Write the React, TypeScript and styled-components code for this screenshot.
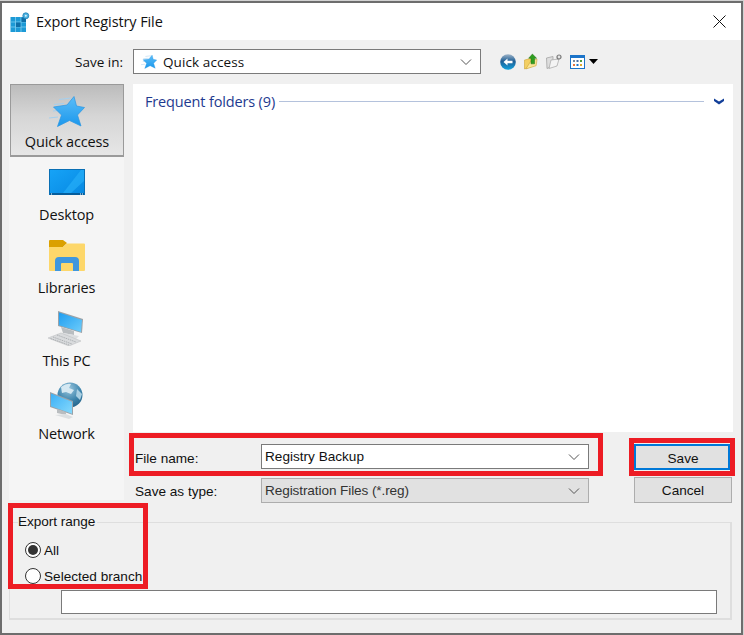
import React from 'react';
import styled, { createGlobalStyle } from 'styled-components';

const UI_FONT = '"Open Sans", "Noto Sans", "Liberation Sans", sans-serif';
const FORM_FONT = '"Liberation Sans", Arial, sans-serif';

const Global = createGlobalStyle`
  html, body { margin: 0; padding: 0; background: #d2d2d2; }
  body { width: 744px; height: 635px; overflow: hidden; }
  * { box-sizing: border-box; }
`;

/*** WINDOW ***/
const Window = styled.div`
  position: relative;
  width: 743px;
  height: 634px;
  margin-top: 1px;
  border: 2px solid #6d6d6d;
  background: #f0f0f0;
  color: #111;
  font-family: ${UI_FONT};
  display: flex;
  flex-direction: column;
`;

const TitleBar = styled.div`
  height: 37px;
  background: #fff;
  display: flex;
  align-items: center;
  padding: 0 15px 0 8px;
  gap: 6px;
`;

const Title = styled.div`
  flex: 1;
  font-size: 14.5px;
  letter-spacing: -0.1px;
`;

/*** TOOLBAR ***/
const Toolbar = styled.div`
  height: 44px;
  display: flex;
  align-items: center;
  padding-bottom: 1px;
`;

const SaveInLabel = styled.div`
  width: 121px;
  text-align: right;
  font-size: 13.5px;
  margin-right: 10px;
`;

const LocationBox = styled.div`
  width: 348px;
  height: 25px;
  background: #fff;
  border: 1px solid #7a7a7a;
  display: flex;
  align-items: center;
  padding: 0 8px 0 7px;
  gap: 6px;
  font-size: 13.5px;
  letter-spacing: 0.1px;
`;

const Grow = styled.div`
  flex: 1;
`;

const ToolIcons = styled.div`
  display: flex;
  align-items: center;
  margin-left: 19px;
  margin-right: 4px;
  gap: 8px;
`;

/*** MAIN ***/
const MainRow = styled.div`
  display: flex;
  align-items: flex-start;
  margin-left: 7px;
  gap: 9px;
`;

const Sidebar = styled.div`
  width: 115px;
  height: 416px;
  background: #f5f5f5;
  display: flex;
  flex-direction: column;
`;

const Place = styled.div<{ $active?: boolean }>`
  flex: 0 0 73px;
  display: flex;
  flex-direction: column;
  align-items: center;
  justify-content: flex-end;
  padding-bottom: ${(props) => (props.$active ? '3px' : '5px')};
  margin-left: ${(props) => (props.$active ? '1px' : '0')};
  font-size: 14.5px;
  letter-spacing: -0.15px;
  line-height: 20px;
  border: ${(props) => (props.$active ? '1px solid #9a9a9a' : 'none')};
  border-bottom-width: ${(props) => (props.$active ? '2px' : '0')};
  background: ${(props) =>
    props.$active ? 'linear-gradient(#bcbcbc, #d6d6d6 45%, #e6e6e6)' : 'transparent'};
`;

const PlaceIcon = styled.div<{ $active?: boolean }>`
  height: 46px;
  padding-top: ${(props) => (props.$active ? '6px' : '0')};
  display: flex;
  align-items: center;
  justify-content: center;
`;

const RightColumn = styled.div`
  width: 600px;
  display: flex;
  flex-direction: column;
`;

const FilePane = styled.div`
  flex: 0 0 348px;
  background: #fff;
  padding: 6px 9px 0 12px;
`;

const GroupHeader = styled.div`
  display: flex;
  align-items: center;
  height: 22px;
  color: #1e3a8f;
  font-size: 14.5px;
  letter-spacing: -0.15px;
  gap: 4px;
`;

const GroupLine = styled.div`
  flex: 1;
  height: 1px;
  background: #b4c2dc;
  margin-right: 6px;
`;

/*** FORM ***/
const Form = styled.div`
  display: grid;
  grid-template-columns: 126px 328px 98px;
  grid-template-rows: 26px 26px;
  row-gap: 7px;
  padding: 12px 0 0 2px;
  font-family: ${FORM_FONT};
  font-size: 13.6px;
`;

const FormLabel = styled.div`
  display: flex;
  align-items: center;
  height: 25px;
  padding-top: 4px;
`;

const Combo = styled.div<{ $disabled?: boolean }>`
  height: 25px;
  margin-top: ${(props) => (props.$disabled ? '1px' : '0')};
  display: flex;
  align-items: center;
  justify-content: space-between;
  padding: 0 8px 0 3px;
  background: ${(props) => (props.$disabled ? '#e1e1e1' : '#fff')};
  border: 1px solid ${(props) => (props.$disabled ? '#adadad' : '#7a7a7a')};
  color: ${(props) => (props.$disabled ? '#333' : '#111')};
  letter-spacing: ${(props) => (props.$disabled ? '-0.1px' : '0')};
`;

const Button = styled.div<{ $primary?: boolean }>`
  margin-left: 45px;
  width: ${(props) => (props.$primary ? '96px' : '98px')};
  height: 26px;
  padding: ${(props) => (props.$primary ? '2px 0 0 2px' : '0')};
  display: flex;
  align-items: center;
  justify-content: center;
  background: #e1e1e1;
  border: ${(props) => (props.$primary ? '2px solid #0078d7' : '1px solid #adadad')};
`;

/*** EXPORT RANGE ***/
const RangeGroup = styled.fieldset`
  margin: 9px 0 0 7px;
  width: 723px;
  height: 108px;
  border: solid #dedede;
  border-width: 1px 2px 2px 1px;
  padding: 0 13px 0 8px;
  font-family: ${FORM_FONT};
  font-size: 13.6px;
  display: flex;
  flex-direction: column;
`;

const RangeLegend = styled.legend`
  padding: 0 2px 0 0;
  height: 20px;
  line-height: 20px;
  letter-spacing: -0.05px;
`;

const RadioList = styled.div`
  margin: 5px 0 0 7px;
`;

const RadioRow = styled.div`
  display: flex;
  align-items: center;
  height: 26px;
  gap: 3px;
`;

const RadioDot = styled.span<{ $on?: boolean }>`
  width: 16px;
  height: 16px;
  border-radius: 50%;
  background: #fff;
  border: 1px solid #333;
  display: flex;
  align-items: center;
  justify-content: center;
  &::after {
    content: "";
    width: 10px;
    height: 10px;
    border-radius: 50%;
    background: ${(props) => (props.$on ? '#333' : 'transparent')};
  }
`;

const PathBox = styled.div`
  margin: 1px 0 0 43px;
  height: 24px;
  background: #fff;
  border: 1px solid #7a7a7a;
`;

/*** HIGHLIGHTS ***/
const Mark = styled.div<{ $x: number; $y: number; $w: number; $h: number }>`
  position: absolute;
  left: ${(props) => props.$x - 2}px;
  top: ${(props) => props.$y - 3}px;
  width: ${(props) => props.$w}px;
  height: ${(props) => props.$h}px;
  border: 5px solid #ed1c24;
  pointer-events: none;
`;

/*** ICONS ***/
const Chevron = () => (
  <svg width="12" height="8" viewBox="0 0 12 8">
    <path d="M1 1.5 L6 6.5 L11 1.5" fill="none" stroke="#555" strokeWidth="1" />
  </svg>
);

const StarIcon = ({ size }: { size: number }) => (
  <svg width={size} height={size} viewBox="0 0 36 32">
    <defs>
      <linearGradient id={`star${size}`} x1="0" y1="0" x2="0" y2="1">
        <stop offset="0" stopColor="#5bbdf8" />
        <stop offset="1" stopColor="#1a97ec" />
      </linearGradient>
    </defs>
    <path d="M10 3.500 L22 2 M5 8.500 L15 7.500 M4 15 L9 14.500 M0 22 L9 21" stroke="#a4cfee" strokeWidth="1.100" />
    <path
      d="M25 0.500 L27.500 10 L35.500 11.500 L28.500 19 L32 30 L20.500 24.500 L8.500 30.500 L12.500 19 L4.500 11 L18 9 Z"
      fill={`url(#star${size})`}
      stroke="#2a95e2"
      strokeWidth="0.700"
      strokeLinejoin="round"
    />
  </svg>
);

const AppIcon = () => (
  <svg width="20" height="20" viewBox="0 0 20 20">
    <rect x="0.500" y="5" width="15.500" height="15" fill="#1d9ad6" />
    <path d="M5.500 5v15M11 5v15M0.500 10h15.500M0.500 15h15.500" stroke="#7fcdf0" strokeWidth="0.8" />
    <rect x="6" y="10.500" width="4.500" height="4.500" fill="#0f6fa8" />
    <rect x="11.500" y="5.500" width="4.500" height="4.500" fill="#0f6fa8" />
    <circle cx="15.800" cy="3.800" r="3" fill="#4fb3e0" stroke="#1d7fb5" strokeWidth="0.8" />
    <circle cx="15.800" cy="3.800" r="1" fill="#d9f1fb" />
  </svg>
);

const CloseIcon = () => (
  <svg width="13" height="13" viewBox="0 0 13 13">
    <path d="M0.500 0.500 L12.500 12.500 M12.500 0.500 L0.500 12.500" stroke="#111" strokeWidth="1" />
  </svg>
);

const BackIcon = () => (
  <svg width="16" height="16" viewBox="0 0 16 16">
    <defs>
      <linearGradient id="back" x1="0" y1="0" x2="0" y2="1">
        <stop offset="0" stopColor="#9fb4c8" />
        <stop offset="0.45" stopColor="#1f5f96" />
        <stop offset="1" stopColor="#13a2dc" />
      </linearGradient>
    </defs>
    <circle cx="8" cy="8" r="7.800" fill="url(#back)" />
    <path d="M3.500 8 L7.500 4.500 V6.800 H12.500 V9.200 H7.500 V11.500 Z" fill="#fff" />
  </svg>
);

const UpFolderIcon = () => (
  <svg width="14" height="17" viewBox="0 0 15 17">
    <path d="M0.500 7 L8 5 V14 L0.500 16.500 Z" fill="#f3cf62" stroke="#c9a02f" strokeWidth="0.6" />
    <path d="M8 7 L14 6 L13 13 L2 16.500 Z" fill="#fbe596" stroke="#c9a02f" strokeWidth="0.6" />
    <path d="M9 0.500 L13.500 5 H11.300 V11 H7.500 V5 H5 Z" fill="#2f9e1f" stroke="#1c6e12" strokeWidth="0.5" />
  </svg>
);

const NewFolderIcon = () => (
  <svg width="16" height="15" viewBox="0 0 16 15">
    <path d="M0.500 4 L7 2.500 V12 L1 14.500 Z" fill="#dedede" stroke="#9b9b9b" strokeWidth="0.7" />
    <path d="M3 14.500 L5 6 L13 5 L11 12 Z" fill="#f4f4f4" stroke="#a5a5a5" strokeWidth="0.7" />
    <circle cx="13" cy="3" r="2" fill="#e5e5e5" stroke="#7a7a7a" strokeWidth="1.200" />
  </svg>
);

const ViewIcon = () => (
  <svg width="15" height="14" viewBox="0 0 15 14">
    <rect x="0.500" y="0.500" width="14" height="13" fill="#fff" stroke="#1c74c9" />
    <rect x="1" y="1" width="13" height="2" fill="#1c74c9" />
    <rect x="3" y="5" width="2" height="2" fill="#7a8aa0" />
    <rect x="6.500" y="5" width="2" height="2" fill="#4a6fa5" />
    <rect x="10" y="5" width="2" height="2" fill="#4d9a3a" />
    <rect x="3" y="9" width="2" height="2" fill="#e8743b" />
    <rect x="6.500" y="9" width="2" height="2" fill="#1c74c9" />
    <rect x="10" y="9" width="2" height="2" fill="#e0a82e" />
  </svg>
);

const Caret = () => (
  <svg width="9" height="5" viewBox="0 0 9 5">
    <path d="M0 0 H9 L4.500 5 Z" fill="#000" />
  </svg>
);

const DoubleChevron = () => (
  <svg width="10" height="7" viewBox="0 0 10 7">
    <path d="M0 0.500 L5 3.500 L10 0.500 V3 L5 6.500 L0 3 Z" fill="#123f99" />
  </svg>
);

const DesktopIcon = () => (
  <svg width="36" height="27" viewBox="0 0 36 27">
    <defs>
      <linearGradient id="desk" x1="0" y1="0" x2="1" y2="1">
        <stop offset="0" stopColor="#16a3f7" />
        <stop offset="1" stopColor="#0789e2" />
      </linearGradient>
    </defs>
    <rect x="0" y="0" width="36" height="26" fill="#0a6fb4" />
    <rect x="1" y="1" width="34" height="24" fill="url(#desk)" />
    <path d="M14 24 L32 1 H35 V12 L22 24 Z" fill="#2ab2fa" opacity="0.6" />
    <rect x="1" y="24" width="34" height="2" fill="#055d9c" />
    <path d="M2 25h1M31 25h1M33 25h1" stroke="#fff" strokeWidth="1" />
  </svg>
);

const LibrariesIcon = () => (
  <svg width="36" height="32" viewBox="0 -1 36 32">
    <path d="M0 1 Q0 0 1 0 H14 L18 3 L14 7 H0 Z" fill="#dba000" />
    <path d="M0 7 H14 L18 3.500 H35 Q36 3.500 36 4.500 V30 Q36 31 35 31 H1 Q0 31 0 30 Z" fill="#fdd76a" />
    <path d="M6 31 V21 Q6 17 10 17 H26 Q30 17 30 21 V31 H24 V24 Q24 23 23 23 H13 Q12 23 12 24 V31 Z" fill="#3f97de" />
  </svg>
);

const ThisPcIcon = () => (
  <svg width="38" height="36" viewBox="0 0 38 36">
    <defs>
      <linearGradient id="pc" x1="0" y1="0" x2="1" y2="1">
        <stop offset="0" stopColor="#1f9df0" />
        <stop offset="1" stopColor="#6ecdfb" />
      </linearGradient>
    </defs>
    <path d="M10 1 L35 9 L34 23 L10 16 Z" fill="#9aa2a8" />
    <path d="M11 2.500 L34 10 L33 22 L11 15.200 Z" fill="url(#pc)" />
    <path d="M13 17 L26 21 V25 L15 23 Z" fill="#b9bdc0" />
    <path d="M15 23 L31 26 L28 29 L14 25 Z" fill="#dcdee0" />
    <path d="M0 28 L13 23 L33 31 L21 36 Z" fill="#d9dbdd" stroke="#b8bbbd" strokeWidth="0.5" />
    <path d="M5 27 L24 34 M2.500 28.500 L21 35 M9 25 L28 32" stroke="#a8acaf" strokeWidth="0.9" strokeDasharray="1.500 0.800" />
  </svg>
);

const NetworkIcon = () => (
  <svg width="36" height="38" viewBox="0 0 36 38">
    <defs>
      <radialGradient id="globe" cx="0.45" cy="0.25" r="0.85">
        <stop offset="0" stopColor="#9cc7de" />
        <stop offset="0.55" stopColor="#3f86ae" />
        <stop offset="1" stopColor="#1d5a80" />
      </radialGradient>
      <linearGradient id="net" x1="0" y1="0" x2="1" y2="1">
        <stop offset="0" stopColor="#3cb0f6" />
        <stop offset="1" stopColor="#86d9fc" />
      </linearGradient>
    </defs>
    <circle cx="21" cy="13" r="12.500" fill="url(#globe)" />
    <path d="M12 5 Q17 1 22 2 L20 6 L25 8 L22 12 L17 10 L13 11 Z" fill="#d5e8f2" />
    <path d="M28 7 L33 12 L31 18 L27 14 Z" fill="#a9cfe2" />
    <path d="M1 10 L24 19 V33 L1 25 Z" fill="#9aa2a8" />
    <path d="M2 11.500 L23 19.700 V31.700 L2 24.200 Z" fill="url(#net)" />
    <path d="M8 27 L17 30 V33 L8 31 Z" fill="#b9bdc0" />
    <path d="M6 33 L17 32 L24 35 L20 37 Z" fill="#dcdfe1" />
  </svg>
);

const places = [
  { label: 'Quick access', icon: <StarIcon size={36} />, active: true },
  { label: 'Desktop', icon: <DesktopIcon /> },
  { label: 'Libraries', icon: <LibrariesIcon /> },
  { label: 'This PC', icon: <ThisPcIcon /> },
  { label: 'Network', icon: <NetworkIcon /> },
];

export default function App() {
  return (
    <>
      <Global />
      <Window>
        <TitleBar>
          <AppIcon />
          <Title>Export Registry File</Title>
          <CloseIcon />
        </TitleBar>

        <Toolbar>
          <SaveInLabel>Save in:</SaveInLabel>
          <LocationBox>
            <StarIcon size={16} />
            <span>Quick access</span>
            <Grow />
            <Chevron />
          </LocationBox>
          <ToolIcons>
            <BackIcon />
            <UpFolderIcon />
            <NewFolderIcon />
            <ViewIcon />
          </ToolIcons>
          <Caret />
        </Toolbar>

        <MainRow>
          <Sidebar>
            {places.map((place) => (
              <Place key={place.label} $active={place.active}>
                <PlaceIcon $active={place.active}>{place.icon}</PlaceIcon>
                {place.label}
              </Place>
            ))}
          </Sidebar>

          <RightColumn>
            <FilePane>
              <GroupHeader>
                Frequent folders (9)
                <GroupLine />
                <DoubleChevron />
              </GroupHeader>
            </FilePane>
            <Form>
              <FormLabel>File name:</FormLabel>
              <Combo>
                Registry Backup
                <Chevron />
              </Combo>
              <Button $primary>Save</Button>
              <FormLabel>Save as type:</FormLabel>
              <Combo $disabled>
                Registration Files (*.reg)
                <Chevron />
              </Combo>
              <Button>Cancel</Button>
            </Form>
          </RightColumn>
        </MainRow>

        <RangeGroup>
          <RangeLegend>Export range</RangeLegend>
          <RadioList>
            <RadioRow>
              <RadioDot $on />
              All
            </RadioRow>
            <RadioRow>
              <RadioDot />
              Selected branch
            </RadioRow>
          </RadioList>
          <PathBox />
        </RangeGroup>

        <Mark $x={129} $y={433} $w={474} $h={43} />
        <Mark $x={629} $y={438} $w={106} $h={38} />
        <Mark $x={8} $y={503} $w={140} $h={86} />
      </Window>
    </>
  );
}
